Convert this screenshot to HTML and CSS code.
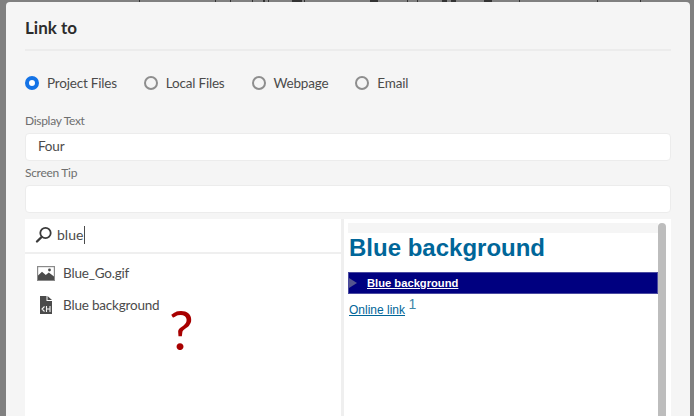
FILE: index.html
```html
<!DOCTYPE html>
<html lang="en">
<head>
<meta charset="utf-8">
<title>Link to</title>
<link rel="stylesheet" href="styles.css">
</head>
<body>
<svg class="marks" width="694" height="2" viewBox="0 0 694 2"><path d="M139 0h1v2h-1ZM215 0h1v2h-1ZM230 0h1v2h-1ZM252 0h1v2h-1ZM263 0h2v2h-2ZM268 0h1v2h-1ZM292 0h10v2h-10ZM304 0h1v2h-1ZM370 0h8v2h-8ZM407 0h1v2h-1ZM417 0h1v2h-1ZM442 0h5v2h-5ZM451 0h5v2h-5ZM484 0h8v2h-8ZM519 0h1v2h-1ZM597 0h1v2h-1ZM640 0h1v2h-1Z" fill="#333"/></svg>
<div class="dialog">
  <h1 class="title">Link to</h1>
  <div class="rule"></div>
  <div class="radios">
    <label class="radio"><span class="dot on"></span>Project Files</label>
    <label class="radio"><span class="dot"></span>Local Files</label>
    <label class="radio"><span class="dot"></span>Webpage</label>
    <label class="radio"><span class="dot"></span>Email</label>
  </div>
  <div class="label first">Display Text</div>
  <div class="field">Four</div>
  <div class="label">Screen Tip</div>
  <div class="field"></div>
  <div class="panes">
    <div class="left">
      <div class="search">
        <svg class="search-icon" width="18" height="18" viewBox="0 0 18 18"><circle cx="10.500" cy="7" r="5.200" fill="none" stroke="#3a3a3a" stroke-width="1.800"/><path d="M6.600 11 2 15.500" stroke="#3a3a3a" stroke-width="2.400" stroke-linecap="round"/></svg>
        <span class="query">blue</span>
      </div>
      <div class="row">
        <svg class="row-icon" width="18" height="15" viewBox="0 0 18 15"><rect x=".6" y=".6" width="16.800" height="13.800" fill="#fff" stroke="#8a8a8a" stroke-width="1.200"/><path d="M1 14V9.500l4-3.700 3.800 3.200 3-2.400L17 10.500V14Z" fill="#4b4b4b"/><circle cx="12.500" cy="4" r="1.400" fill="#4b4b4b"/></svg>
        <span>Blue_Go.gif</span>
      </div>
      <div class="row">
        <svg class="row-icon" width="18" height="18" viewBox="0 0 18 18"><path d="M3 0h6.500v5H15v13H3Z" fill="#4b4b4b"/><path d="M10.500 0 15 4h-4.500Z" fill="#4b4b4b"/><path d="M7.500 10.500 5 13l2.500 2.500M9.500 10v6M13 10v6M9.500 13H13" fill="none" stroke="#f4f4f4" stroke-width="1.100"/></svg>
        <span>Blue background</span>
      </div>
      <div class="mark">?</div>
    </div>
    <div class="right">
      <div class="preview">
        <div class="strip"></div>
        <h2 class="doc-title">Blue background</h2>
        <div class="band"><span class="arrow"></span><a class="band-link">Blue background</a></div>
        <p class="doc-line"><a class="doc-link">Online link</a> <sup class="doc-sup">1</sup></p>
      </div>
      <div class="scrollbar"></div>
    </div>
  </div>
</div>
</body>
</html>
```
FILE: styles.css
```css
* { box-sizing: border-box; }
html, body { margin: 0; height: 100%; }
body {
  background: #808080;
  padding: 2px 4px 0 6px;
  overflow: hidden;
  font-family: "Lato", "Open Sans", sans-serif;
  color: #4b4b4b;
}
.marks { position: absolute; left: 0; top: 0; }
.dialog {
  position: relative;
  background: #f5f5f5;
  height: 430px;
  border-radius: 4px 4px 0 0;
  padding: 0 19px;
}
.title {
  margin: 0;
  padding-top: 15px;
  height: 47px;
  font-size: 17px;
  line-height: 22px;
  font-weight: 700;
  color: #2c2c2c;
}
.rule { height: 2px; background: #ececec; }
.radios { display: flex; margin-top: 24px; height: 16px; align-items: center; }
.radio { display: flex; align-items: center; gap: 8px; font-size: 13.500px; letter-spacing: -.2px; margin-right: 27px; color: #4b4b4b; }
.dot { width: 14px; height: 14px; border: 2px solid #8e8e8e; border-radius: 50%; }
.dot.on { border: 4px solid #1473e6; background: #fff; }
.label { font-size: 12px; letter-spacing: -.3px; line-height: 16px; color: #6e6e6e; margin-top: 4px; }
.label.first { margin-top: 22px; }
.field {
  height: 28px;
  margin-top: 4px;
  background: #fff;
  border: 1px solid #ececec;
  border-radius: 4px;
  font-size: 13.500px;
  letter-spacing: -.2px;
  line-height: 24px;
  padding-left: 12px;
  color: #4b4b4b;
}
.panes { display: flex; margin-top: 6px; height: 200px; background: #fff; }
.left { position: relative; width: 319px; flex: none; border-right: 3px solid #efefef; }
.search { display: flex; align-items: center; height: 35px; margin-bottom: 3px; border-bottom: 2px solid #efefef; padding: 0 0 2px 10px; font-size: 14px; }
.search-icon { flex: none; }
.query { margin-left: 4px; padding-right: 1px; border-right: 1px solid #4b4b4b; line-height: 18px; }
.row { display: flex; align-items: center; gap: 8px; height: 32px; padding-left: 12px; font-size: 13.500px; letter-spacing: -.2px; }
.row-icon { flex: none; }
.mark { position: absolute; left: 144px; top: 78px; font-size: 55px; line-height: 64px; color: #a80000; }
.right { flex: 1; display: flex; padding: 4px 5px 0 4px; min-width: 0; }
.preview { flex: 1; font-family: "Liberation Sans", sans-serif; min-width: 0; }
.strip { height: 10px; background: #f5f5f5; }
.doc-title { margin: 1px 0 0 1px; font-size: 24px; line-height: 28px; font-weight: 700; color: #006699; }
.band { display: flex; align-items: center; height: 22px; margin-top: 10px; background: #000080; border: 1px solid #4a4aa0; }
.arrow { width: 0; height: 0; border-left: 8px solid #55558f; border-top: 5px solid transparent; border-bottom: 5px solid transparent; }
.band-link { margin-left: 10px; color: #fff; font-size: 11.200px; font-weight: 700; text-decoration: underline; }
.doc-line { margin: 9px 0 0 1px; font-size: 12px; color: #006699; }
.doc-link { text-decoration: underline; }
.doc-sup { font-size: 14px; line-height: 0; color: #3f86a8; }
.scrollbar { width: 8px; background: #bdbdbd; border-radius: 4px 4px 0 0; }
```
